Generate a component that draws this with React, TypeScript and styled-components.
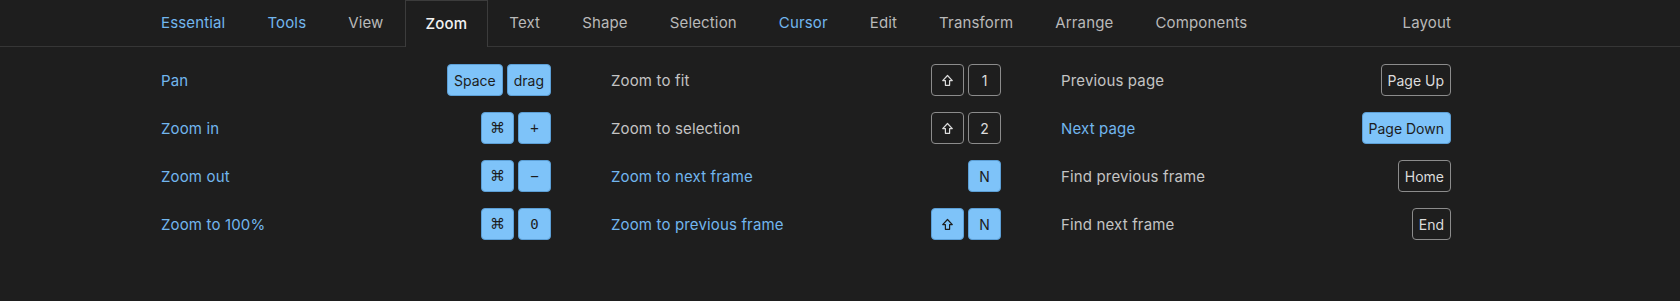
import styled, { createGlobalStyle, css } from "styled-components"

const GlobalStyle = createGlobalStyle`
  html, body {
    margin: 0;
    padding: 0;
    background: #1e1e1e;
    font-family: Inter, "Noto Sans", sans-serif;
  }
`

type Tone = "blue" | "plain"

const tabs: { name: string; tone: Tone; active?: boolean }[] = [
  { name: "Essential", tone: "blue" },
  { name: "Tools", tone: "blue" },
  { name: "View", tone: "plain" },
  { name: "Zoom", tone: "plain", active: true },
  { name: "Text", tone: "plain" },
  { name: "Shape", tone: "plain" },
  { name: "Selection", tone: "plain" },
  { name: "Cursor", tone: "blue" },
  { name: "Edit", tone: "plain" },
  { name: "Transform", tone: "plain" },
  { name: "Arrange", tone: "plain" },
  { name: "Components", tone: "plain" },
]

type KeyDef = { label: string; mono?: boolean; shift?: boolean; big?: boolean }
type Shortcut = { name: string; tone: Tone; keys: KeyDef[] }

const SHIFT: KeyDef = { label: "", shift: true }
const CMD: KeyDef = { label: "⌘", big: true }

const columns: Shortcut[][] = [
  [
    { name: "Pan", tone: "blue", keys: [{ label: "Space" }, { label: "drag" }] },
    { name: "Zoom in", tone: "blue", keys: [CMD, { label: "+", mono: true }] },
    { name: "Zoom out", tone: "blue", keys: [CMD, { label: "−", mono: true }] },
    { name: "Zoom to 100%", tone: "blue", keys: [CMD, { label: "0", mono: true }] },
  ],
  [
    { name: "Zoom to fit", tone: "plain", keys: [SHIFT, { label: "1" }] },
    { name: "Zoom to selection", tone: "plain", keys: [SHIFT, { label: "2" }] },
    { name: "Zoom to next frame", tone: "blue", keys: [{ label: "N" }] },
    { name: "Zoom to previous frame", tone: "blue", keys: [SHIFT, { label: "N" }] },
  ],
  [
    { name: "Previous page", tone: "plain", keys: [{ label: "Page Up" }] },
    { name: "Next page", tone: "blue", keys: [{ label: "Page Down" }] },
    { name: "Find previous frame", tone: "plain", keys: [{ label: "Home" }] },
    { name: "Find next frame", tone: "plain", keys: [{ label: "End" }] },
  ],
]

function ShiftIcon() {
  return (
    <svg width="13" height="13" viewBox="0 0 13 13" fill="none">
      <path
        d="M6.5 1.5 L11.3 6.6 H8.6 V11.3 H4.4 V6.6 H1.7 Z"
        stroke="currentColor"
        strokeWidth="1.2"
        strokeLinejoin="round"
      />
    </svg>
  )
}

export default function App() {
  return (
    <>
      <GlobalStyle />
      <TabBar>
        <TabRow>
          {tabs.map((t) => (
            <Tab key={t.name} $tone={t.tone} $active={!!t.active}>
              {t.name}
            </Tab>
          ))}
          <Tab $tone="plain" $active={false} $push>
            Layout
          </Tab>
        </TabRow>
      </TabBar>
      <Content>
        {columns.map((col, i) => (
          <Column key={i}>
            {col.map((s) => (
              <Row key={s.name}>
                <Label $tone={s.tone}>{s.name}</Label>
                <Keys>
                  {s.keys.map((k, j) => (
                    <Key key={j} $tone={s.tone} $mono={!!k.mono} $big={!!k.big}>
                      {k.shift ? <ShiftIcon /> : k.label}
                    </Key>
                  ))}
                </Keys>
              </Row>
            ))}
          </Column>
        ))}
      </Content>
    </>
  )
}

const TabBar = styled.div`
  border-bottom: 1px solid #363636;
  padding-left: 140px;
`

const TabRow = styled.div`
  width: 1332px;
  height: 46px;
  display: flex;
`

const Tab = styled.div<{ $tone: Tone; $active: boolean; $push?: boolean }>`
  display: flex;
  align-items: center;
  padding: 0 20px 2px;
  border: 1px solid transparent;
  border-bottom: none;
  font-size: 15px;
  letter-spacing: 0.15px;
  color: ${(p) => (p.$tone === "blue" ? "#72b6ee" : "#b9b9b9")};
  ${(p) => p.$push && "margin-left: auto;"}
  ${(p) =>
    p.$active &&
    css`
      color: #f2f2f2;
      font-weight: 500;
      border-color: #3c3c3c;
      background: #1e1e1e;
      height: 47px;
      box-sizing: border-box;
      margin-bottom: -1px;
      position: relative;
    `}
`

const Content = styled.div`
  box-sizing: border-box;
  margin-left: 140px;
  width: 1332px;
  padding: 17px 21px 0;
  display: grid;
  grid-template-columns: repeat(3, 1fr);
  column-gap: 60px;
  height: 254px;
`

const Column = styled.div`
  display: flex;
  flex-direction: column;
  gap: 16px;
`

const Row = styled.div`
  height: 32px;
  display: flex;
  align-items: center;
  justify-content: space-between;
`

const Label = styled.span<{ $tone: Tone }>`
  font-size: 15px;
  letter-spacing: 0.15px;
  color: ${(p) => (p.$tone === "blue" ? "#72b6ee" : "#c4c4c4")};
`

const Keys = styled.div`
  display: flex;
  gap: 4px;
`

const Key = styled.span<{ $tone: Tone; $mono: boolean; $big: boolean }>`
  box-sizing: border-box;
  height: 32px;
  min-width: 33px;
  padding: 0 6px;
  display: flex;
  align-items: center;
  justify-content: center;
  border-radius: 4px;
  font-size: ${(p) => (p.$big ? "15px" : "14px")};
  font-family: ${(p) =>
    p.$big
      ? '"DejaVu Sans", sans-serif'
      : p.$mono
        ? '"DejaVu Sans Mono", "Liberation Mono", monospace'
        : 'Inter, "Noto Sans", sans-serif'};
  ${(p) =>
    p.$tone === "blue"
      ? css`
          background: #7ec3f9;
          border: 1px solid #5c9fd6;
          color: #1c1c1c;
        `
      : css`
          background: transparent;
          border: 1px solid #8c8c8c;
          color: #dcdcdc;
        `}
`
